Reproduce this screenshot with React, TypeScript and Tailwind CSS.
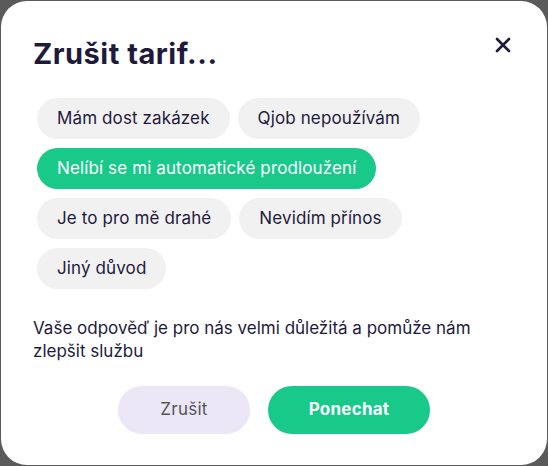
import { useState } from 'react';

const reasons = [
  'Mám dost zakázek',
  'Qjob nepoužívám',
  'Nelíbí se mi automatické prodloužení',
  'Je to pro mě drahé',
  'Nevidím přínos',
  'Jiný důvod',
];

export default function App() {
  const [selected, setSelected] = useState(reasons[2]);

  return (
    <div
      className="h-[466px] w-[548px] bg-[#5a5a5a] p-px"
      style={{ fontFamily: 'Inter, "Noto Sans", sans-serif' }}
    >
      <div className="relative flex h-full flex-col rounded-[26px] bg-white px-[32px] pt-[35px] text-[#1e1a3c]">
        <button className="absolute right-[35px] top-[35px] flex h-[18px] w-[18px] items-center justify-center">
          <svg width="16" height="16" viewBox="0 0 16 16" fill="none" stroke="#1e1a3c" strokeWidth="2.6" strokeLinecap="round">
            <path d="M2 2 14 14M14 2 2 14" />
          </svg>
        </button>

        <h2 className="text-[29px] font-bold leading-[36px] tracking-[0.5px]">Zrušit tarif...</h2>

        {/* Důvody zrušení */}
        <div className="mt-[26px] flex flex-wrap gap-x-2 gap-y-[9px] pl-1">
          {reasons.map((r) => (
            <button
              key={r}
              onClick={() => setSelected(r)}
              className={
                'h-[41px] rounded-full px-5 text-[17px] tracking-[0.12px] ' +
                (r === selected ? 'bg-[#18c98a] text-white' : 'bg-[#f1f1f1] text-[#1e1a3c]')
              }
            >
              {r}
            </button>
          ))}
        </div>

        <p className="mt-[28px] text-[17px] leading-[23px]">
          Vaše odpověď je pro nás velmi důležitá a pomůže nám zlepšit službu
        </p>

        <div className="mt-[23px] flex justify-center gap-[18px]">
          <button className="h-[48px] w-[132px] rounded-full bg-[#ebe7f6] text-[17px] tracking-[0.25px] text-[#555]">
            Zrušit
          </button>
          <button className="h-[48px] w-[162px] rounded-full bg-[#18c98a] text-[17px] font-bold tracking-[0.25px] text-white">
            Ponechat
          </button>
        </div>
      </div>
    </div>
  );
}
